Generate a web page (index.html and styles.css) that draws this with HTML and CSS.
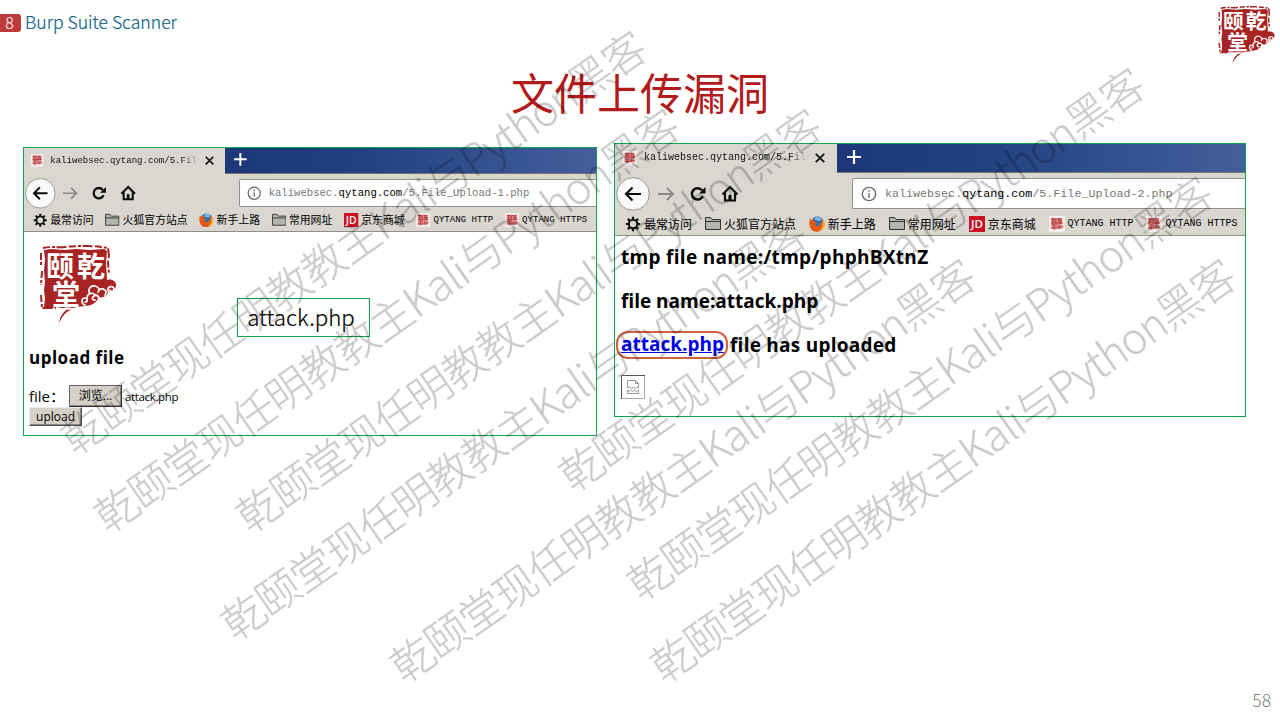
FILE: index.html
```html
<!DOCTYPE html>
<html lang="zh-CN">
<head>
<meta charset="utf-8">
<title>Burp Suite Scanner</title>
<link rel="stylesheet" href="styles.css">
</head>
<body>
<svg class="defs" width="0" height="0">
  <symbol id="seal" viewBox="0 0 80 80">
    <path fill="#a82323" d="M6 5l8-1 12 1 12-1 14 1 14-1 3 2-1 12 1 17c5-2 10 2 9 6-1 5-5 6-8 5 0 5-5 7-9 6-2 6-8 9-14 9-12 1-20 5-25 15l-1 2c1-8 6-13 12-16l-9 1-6-1-7 2-5-2 1-8-1-9 1-8-1-11 1-12z"/>
    <path fill="none" stroke="#a82323" stroke-width="2" stroke-dasharray="7 2 3 1.500 10 2.500" d="M5 3c10-2 15 0 22-1s15-1 22-1 14 1 21 2l1 7-1 8 1 10M3 8v12M4 26l-1 14M3 50l1 13h14"/>
    <g class="seal-text"><text x="8" y="31.500">颐</text><text x="39" y="31.500">乾</text><text x="14" y="60">堂</text></g>
    <path fill="none" stroke="#fff" stroke-width="1.700" stroke-linecap="round" d="M30 64c10-1 24 0 29-7 4-5 0-8-3-6s-1 5 1 4M47 60c-4-1-4-7 0-7 3 0 3 4 0 4M49 53c0-5 6-6 8-3M52 49c-3-5 1-9 5-8s5 4 3 6M61 45c4-3 9 1 6 5M70 46c-1-5 6-6 6-2 0 3-4 3-4 1M61 57c4 1 8-1 8-5M47 62c6 1 10-1 12-3"/>
  </symbol>
  <symbol id="mini" viewBox="0 0 16 16">
    <path fill="#f6eeec" d="M0 0h16v16H0z"/>
    <path fill="#dd9a98" d="M2 2h11v7l2 1-2 3H7l-3 2 1-2H2z"/>
    <path fill="none" stroke="#b83c3c" d="M2 3h5M8 3h5M3 5h4M9 5h4M2 7h12M4 2v6M7 3v5M10 2v6M12 4v4M3 9h5M2 12h6M5 8v5M8 11h5M10 9v4"/>
  </symbol>
  <symbol id="folder" viewBox="0 0 16 16"><path fill="#b5b3af" stroke="#333" d="M.5 13.500v-12h5l1.500 2h8.500v10zM.5 5.500h15"/></symbol>
  <symbol id="gear" viewBox="0 0 16 16"><circle cx="8" cy="8" r="4.200" fill="none" stroke="#111" stroke-width="2"/><path stroke="#111" stroke-width="2.200" d="M8 .8v3M8 12.200v3M.8 8h3M12.200 8h3M2.900 2.900l2 2M11.100 11.100l2 2M2.900 13.100l2-2M11.100 4.900l2-2"/></symbol>
  <symbol id="fox" viewBox="0 0 16 16"><circle cx="8.500" cy="7" r="6.500" fill="#2a6fb5"/><path fill="#78b8e4" d="M6 2c3-2 6-1 7 1l-3 2-4-1z"/><path fill="#e45a14" d="M1 3l2 1 3-1-1 3 3 1-2 2c2 2 5 1 6-2 1-2 1-4 0-5 5 3 4 9 1 12-4 3-9 2-11-1C0 10 0 6 1 3z"/><path fill="#fbb62b" d="M13 3c5 5 3 12-4 12 4-1 6-6 4-12z"/></symbol>
  <symbol id="jd" viewBox="0 0 16 16"><path fill="#cb1120" d="M0 0h16v16H0z"/><text x="2" y="12.300" fill="#fff" font-family="Open Sans, sans-serif" font-size="11.500" font-weight="600" textLength="12">JD</text></symbol>
  <symbol id="nav" viewBox="0 0 126 36">
    <circle cx="18" cy="18" r="16.300" fill="#fafafa" stroke="#979592"/>
    <path fill="none" stroke="#0c0c0c" stroke-width="2.200" d="M26 18H11M17.500 11.500L11 18l6.500 6.500"/>
    <path fill="none" stroke="#8c8a87" stroke-width="1.800" d="M43 18h15M52 12l6 6-6 6"/>
    <path fill="none" stroke="#0c0c0c" stroke-width="2.500" d="M87 14.200a5.700 5.700 0 1 0 .8 6"/>
    <path fill="#0c0c0c" d="M90.500 11v6.500H84z"/>
    <path fill="none" stroke="#0c0c0c" stroke-width="2.200" d="M107.500 18.500l7.500-7.500 7.500 7.500M110 17v7.500h10V17"/>
    <path fill="#0c0c0c" d="M113.500 19h3v5h-3z"/>
  </symbol>
</svg>

<main class="slide">
  <header class="topbar">
    <span class="num">8</span><span class="section">Burp Suite Scanner</span>
    <svg class="brand"><use href="#seal"/></svg>
  </header>
  <h1 class="title">文件上传漏洞</h1>

  <div class="shots">
    <section class="shot first">
      <div class="chrome small">
        <div class="tabs">
          <div class="tab"><svg class="fav"><use href="#mini"/></svg><span class="tabtext">kaliwebsec.qytang.com/5.File</span><svg class="close" viewBox="0 0 10 10"><path d="M.8.8l8.400 8.400M9.200.8L.8 9.200"/></svg></div>
          <div class="strip"><svg class="plus" viewBox="0 0 14 14"><path d="M7 0v14M0 7h14"/></svg></div>
        </div>
        <div class="tools">
          <svg class="nav"><use href="#nav"/></svg>
          <div class="url"><svg class="info" viewBox="0 0 16 16"><circle cx="8" cy="8" r="6.700"/><path d="M8 7v5M8 4v1.700"/></svg><span>kaliwebsec.<b>qytang.com</b>/5.File_Upload-1.php</span></div>
        </div>
        <div class="marks">
          <span><svg><use href="#gear"/></svg>最常访问</span><span><svg><use href="#folder"/></svg>火狐官方站点</span><span><svg><use href="#fox"/></svg>新手上路</span><span><svg><use href="#folder"/></svg>常用网址</span><span><svg><use href="#jd"/></svg>京东商城</span><span class="m"><svg><use href="#mini"/></svg>QYTANG HTTP</span><span class="m"><svg><use href="#mini"/></svg>QYTANG HTTPS</span>
        </div>
      </div>
      <div class="page form">
        <svg class="logo"><use href="#seal"/></svg>
        <h3>upload file</h3>
        <div class="row"><span class="label">file：</span><span class="btn browse">浏览...</span><span class="fname">attack.php</span></div>
        <span class="btn send">upload</span>
      </div>
      <div class="note">attack.php</div>
    </section>

    <section class="shot second">
      <div class="chrome">
        <div class="tabs">
          <div class="tab"><svg class="fav"><use href="#mini"/></svg><span class="tabtext">kaliwebsec.qytang.com/5.File</span><svg class="close" viewBox="0 0 10 10"><path d="M.8.8l8.400 8.400M9.200.8L.8 9.200"/></svg></div>
          <div class="strip"><svg class="plus" viewBox="0 0 14 14"><path d="M7 0v14M0 7h14"/></svg></div>
        </div>
        <div class="tools">
          <svg class="nav"><use href="#nav"/></svg>
          <div class="url"><svg class="info" viewBox="0 0 16 16"><circle cx="8" cy="8" r="6.700"/><path d="M8 7v5M8 4v1.700"/></svg><span>kaliwebsec.<b>qytang.com</b>/5.File_Upload-2.php</span></div>
        </div>
        <div class="marks">
          <span><svg><use href="#gear"/></svg>最常访问</span><span><svg><use href="#folder"/></svg>火狐官方站点</span><span><svg><use href="#fox"/></svg>新手上路</span><span><svg><use href="#folder"/></svg>常用网址</span><span><svg><use href="#jd"/></svg>京东商城</span><span class="m"><svg><use href="#mini"/></svg>QYTANG HTTP</span><span class="m"><svg><use href="#mini"/></svg>QYTANG HTTPS</span>
        </div>
      </div>
      <div class="page result">
        <h3 class="l1">tmp file name:/tmp/phphBXtnZ</h3>
        <h3 class="l2">file name:attack.php</h3>
        <h3 class="l3"><a>attack.php</a><span class="rest">file has uploaded</span></h3>
        <svg class="broken" viewBox="0 0 24 24"><path stroke="#555" d="M.5 24V.5H24"/><path stroke="#aaa" d="M23.500 1v22.500H1"/><path stroke="#999" d="M6.500 13V5.500h8l3 3V13M14.500 5.500v3h3M6.500 13l2-1 2 1.500 2-1.500 2 1.500 3-1.500M6.500 15v3.500h11V15l-2 1.500-2-1.500-2 1.500-2-1.500-2 1.500z"/></svg>
      </div>
    </section>
  </div>
  <footer class="pageno">58</footer>

  <svg class="marksheet" viewBox="0 0 1280 720">
    <g transform="translate(354 242.500) rotate(-34.900)"><text x="-351" y="16" textLength="702">乾颐堂现任明教教主Kali与Python黑客</text></g>
    <g transform="translate(387 320.500) rotate(-34.900)"><text x="-351" y="16" textLength="702">乾颐堂现任明教教主Kali与Python黑客</text></g>
    <g transform="translate(529 320.500) rotate(-34.900)"><text x="-351" y="16" textLength="702">乾颐堂现任明教教主Kali与Python黑客</text></g>
    <g transform="translate(514 428) rotate(-34.900)"><text x="-351" y="16" textLength="702">乾颐堂现任明教教主Kali与Python黑客</text></g>
    <g transform="translate(852 279.500) rotate(-34.900)"><text x="-351" y="16" textLength="702">乾颐堂现任明教教主Kali与Python黑客</text></g>
    <g transform="translate(920 388) rotate(-34.900)"><text x="-351" y="16" textLength="702">乾颐堂现任明教教主Kali与Python黑客</text></g>
    <g transform="translate(683 470.500) rotate(-34.900)"><text x="-351" y="16" textLength="702">乾颐堂现任明教教主Kali与Python黑客</text></g>
    <g transform="translate(943 470.500) rotate(-34.900)"><text x="-351" y="16" textLength="702">乾颐堂现任明教教主Kali与Python黑客</text></g>
  </svg>
</main>
</body>
</html>
```

FILE: styles.css
```css
* { box-sizing: border-box; }
body { margin: 0; background: #fff; overflow: hidden; font-family: "Noto Sans CJK SC", sans-serif; }
svg { display: block; flex: none; }
.defs { position: absolute; }
.slide { position: relative; width: 1280px; height: 720px; display: flex; flex-direction: column; }

.topbar { display: flex; height: 64px; align-items: flex-start; padding: 0 4px 0 0; }
.num { width: 21px; height: 18px; margin-top: 14px; padding-right: 2px; border-radius: 0 3px 3px 0; background: #be3b3c; color: #fff; font-size: 16px; line-height: 16px; text-align: center; font-weight: 300; }
.section { margin: 9px 0 0 4px; font-size: 17.600px; line-height: 26px; color: #0f6285; font-weight: 300; -webkit-text-stroke: .2px #0f6285; white-space: nowrap; }
.brand { width: 59px; height: 59px; margin: 6px 0 0 auto; }
.seal-text { font-family: "Noto Sans CJK SC", sans-serif; font-size: 28px; font-weight: 700; fill: #fff; }

.title { height: 60px; margin: -3px 0 0; text-align: center; font-size: 43px; line-height: 60px; font-weight: 400; color: #b31a1c; }
.shots { display: flex; align-items: flex-start; gap: 17px; padding-left: 23px; margin-top: 22px; }
.shot { position: relative; border: 1px solid #12a052; background: #fff; overflow: hidden; }
.first { width: 574px; height: 289px; margin-top: 4px; }
.second { width: 632px; height: 274px; }

.chrome { width: 630px; height: 92px; background: #dad7d0; border-bottom: 1px solid #908e8a; }
.chrome.small { width: 632px; height: 93px; zoom: .906; }
.tabs { display: flex; height: 29px; }
.tab { display: flex; align-items: center; width: 222px; padding: 0 0 2px 8px; }
.fav { width: 14px; height: 14px; }
.tabtext { width: 164px; margin-left: 7px; overflow: hidden; white-space: nowrap; font: 10px "Liberation Mono", monospace; color: #111; -webkit-mask-image: linear-gradient(90deg, #000 88%, transparent); }
.close { width: 10px; height: 10px; margin-left: 7px; stroke: #111; stroke-width: 1.800; }
.strip { flex: 1; display: flex; align-items: center; padding: 0 0 2px 10px; background: linear-gradient(90deg, #1c3878, #20407f 35%, #435f9c); border-bottom: 1px solid #77756f; }
.plus { width: 14px; height: 14px; stroke: #fff; stroke-width: 2.200; }
.tools { display: flex; height: 35px; align-items: center; margin-top: 3px; }
.nav { width: 126px; height: 36px; }
.url { display: flex; align-items: center; flex: 1; height: 31px; margin-left: 111px; padding-left: 8px; gap: 8px; background: #fff; border: 1px solid #94928e; border-right: 0; border-radius: 2px 0 0 2px; font: 11.700px "Liberation Mono", monospace; color: #777; white-space: nowrap; }
.url b { font-weight: 400; color: #000; }
.info { width: 16px; height: 16px; fill: none; stroke: #666; stroke-width: 1.300; }
.marks { display: flex; align-items: center; gap: 12.900px; height: 25px; padding-left: 10px; font-size: 12px; line-height: 22px; color: #000; white-space: nowrap; }
.marks span { display: flex; align-items: center; gap: 3px; }
.marks svg { width: 16px; height: 16px; }
.marks .m { font: 10px "Liberation Mono", monospace; }

.page { font-family: "Open Sans", sans-serif; color: #000; }
.page h3 { margin: 0; font-weight: 700; white-space: nowrap; }
.form { padding: 13px 0 0 5px; }
.logo { width: 80px; height: 80px; margin-left: 9px; }
.form h3 { margin-top: 21px; font-size: 17px; letter-spacing: .5px; line-height: 24px; }
.row { display: flex; align-items: center; height: 22px; margin-top: 15px; }
.label { width: 40px; font: 15px/22px "Open Sans", "Noto Sans CJK SC", sans-serif; white-space: nowrap; }
.btn { display: block; background: #d5d1c8; border: 1px solid; border-color: #eee #55534f #55534f #eee; box-shadow: inset -1px -1px #8a8780; text-align: center; font: 12px/18px "Open Sans", "Noto Sans CJK SC", sans-serif; }
.browse { width: 53px; height: 22px; line-height: 20px; border-color: #666 #333 #333 #666; }
.fname { margin-left: 3px; padding-top: 1px; font-size: 11.500px; letter-spacing: -.350px; }
.send { width: 53px; height: 19px; line-height: 17px; }
.note { position: absolute; left: 213px; top: 150px; width: 133px; height: 39px; border: 1px solid #12a052; color: #000; font: 300 22.300px/35px "Noto Sans CJK SC", sans-serif; -webkit-text-stroke: .2px #000; text-align: center; padding-right: 5px; }

.result { padding: 7px 0 0 6px; }
.result h3 { height: 28px; margin-bottom: 15.500px; font-size: 19px; line-height: 28px; }
.result .l1 { letter-spacing: .3px; }
.result .l3 { display: flex; align-items: center; position: relative; top: 1px; }
.l3 a { width: 112px; height: 28px; margin-left: -5px; padding-left: 3px; line-height: 23px; border: 2px solid #d4603f; border-radius: 12px; color: #0000e8; text-decoration: underline; }
.l3 .rest { margin-left: 2px; letter-spacing: .250px; }
.broken { width: 24px; height: 24px; margin-top: 17px; fill: none; }
.pageno { position: absolute; right: 9px; bottom: 8px; font-size: 17.500px; line-height: 25px; font-weight: 300; color: #808080; }
.marksheet { position: absolute; left: 0; top: 0; width: 1280px; height: 720px; fill: #000; stroke: #000; stroke-width: .3; opacity: .2; font-family: "Noto Sans CJK SC", sans-serif; font-size: 43px; font-weight: 300; }
```
